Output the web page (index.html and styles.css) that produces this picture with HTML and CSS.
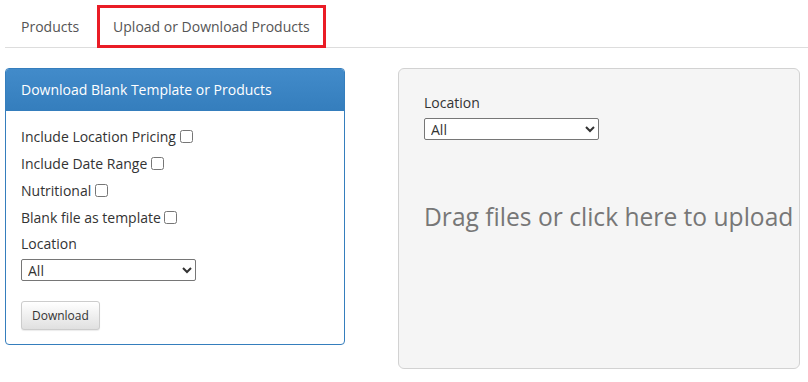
FILE: index.html
```html
<!DOCTYPE html>
<html lang="en">
<head>
    <meta charset="UTF-8">
    <meta name="viewport" content="width=device-width, initial-scale=1.0">
    <title>Upload or Download Products</title>
    <link rel="stylesheet" href="styles.css">
</head>
<body>
    <div class="page">
        <ul class="tabs">
            <li class="tab"><a href="#">Products</a></li>
            <li class="tab active"><a href="#">Upload or Download Products</a></li>
        </ul>

        <div class="content">
            <div class="panel">
                <div class="panel-heading">Download Blank Template or Products</div>
                <div class="panel-body">
                    <div class="row"><label for="locPricing">Include Location Pricing</label> <input type="checkbox" id="locPricing"></div>
                    <div class="row"><label for="dateRange">Include Date Range</label> <input type="checkbox" id="dateRange"></div>
                    <div class="row"><label for="nutritional">Nutritional</label> <input type="checkbox" id="nutritional"></div>
                    <div class="row"><label for="blankFile">Blank file as template</label> <input type="checkbox" id="blankFile"></div>
                    <div class="row label-row"><label for="downloadLocation">Location</label></div>
                    <select id="downloadLocation" class="location-select">
                        <option>All</option>
                    </select>
                    <div class="actions">
                        <button type="button" class="btn">Download</button>
                    </div>
                </div>
            </div>

            <div class="dropzone">
                <label for="uploadLocation" class="drop-label">Location</label>
                <select id="uploadLocation" class="location-select">
                    <option>All</option>
                </select>
                <div class="drop-message">Drag files or click here to upload</div>
            </div>
        </div>
    </div>
</body>
</html>
```

FILE: styles.css
```css
body {
    font-family: "Open Sans", Arial, sans-serif;
    font-size: 14px;
    color: #333;
    margin: 0;
    background-color: #fff;
}
.page {
    padding: 5px 0 0 5px;
}
.tabs {
    display: flex;
    list-style: none;
    margin: 0;
    padding: 0;
    border-bottom: 1px solid #ddd;
}
.tab a {
    display: block;
    padding: 12px 16px 10px;
    line-height: 20px;
    color: #555;
    text-decoration: none;
}
.tab.active {
    margin-left: 2px;
    margin-bottom: -1px;
    border: 3px solid #ea1c26;
}
.tab.active a {
    padding: 9px 13px 8px;
    color: #555;
}
.content {
    display: flex;
    align-items: flex-start;
    margin-top: 20px;
}
.panel {
    width: 340px;
    box-sizing: border-box;
    border: 1px solid #357ebd;
    border-radius: 4px;
    overflow: hidden;
}
.panel-heading {
    height: 42px;
    box-sizing: border-box;
    padding: 11px 15px;
    line-height: 20px;
    color: #fff;
    background-image: linear-gradient(to bottom, #428bca 0%, #357ebd 100%);
    border-bottom: 1px solid #357ebd;
}
.panel-body {
    padding: 16px 15px 14px;
}
.row {
    line-height: 20px;
    margin-bottom: 7px;
    color: #333;
}
.row.label-row {
    margin-top: -1px;
    margin-bottom: 5px;
}
.row input {
    margin: 0;
    width: 13px;
    height: 13px;
    vertical-align: -1px;
}
.location-select {
    display: block;
    width: 175px;
    height: 22px;
    font-family: "Open Sans", Arial, sans-serif;
    font-size: 14px;
    color: #333;
    border: 1px solid #767676;
    border-radius: 2px;
    background-color: #fff;
    padding: 0 2px;
}
.actions {
    margin-top: 20px;
}
.btn {
    font-family: "Open Sans", Arial, sans-serif;
    font-size: 12px;
    color: #333;
    padding: 5px 10px;
    line-height: 17px;
    border: 1px solid #ccc;
    border-radius: 3px;
    background-image: linear-gradient(to bottom, #fff 0%, #e0e0e0 100%);
    box-shadow: 0 1px 1px rgba(0, 0, 0, 0.08);
    cursor: pointer;
}
.dropzone {
    width: 402px;
    height: 301px;
    box-sizing: border-box;
    margin-left: 53px;
    padding: 24px 25px;
    background-color: #f5f5f5;
    border: 1px solid #d2d2d2;
    border-radius: 6px;
}
.drop-label {
    display: block;
    line-height: 20px;
    margin-bottom: 5px;
}
.drop-message {
    margin-top: 60px;
    font-size: 24.6px;
    line-height: 34px;
    color: #777;
    white-space: nowrap;
}
```
